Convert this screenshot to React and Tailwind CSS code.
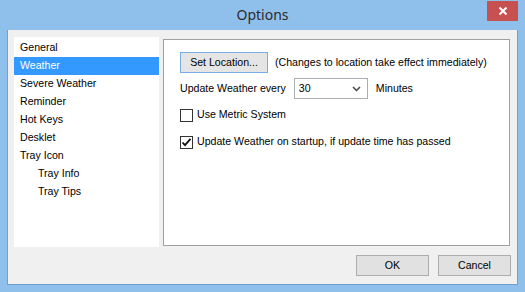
import { useState } from "react";

const items = [
  { label: "General" },
  { label: "Weather" },
  { label: "Severe Weather" },
  { label: "Reminder" },
  { label: "Hot Keys" },
  { label: "Desklet" },
  { label: "Tray Icon" },
  { label: "Tray Info", sub: true },
  { label: "Tray Tips", sub: true },
];

function CheckBox({ checked, label }) {
  return (
    <div className="flex items-center h-[14px]">
      <div className="w-[13px] h-[13px] border border-[#333333] bg-white flex items-center justify-center">
        {checked && (
          <svg width="11" height="11" viewBox="0 0 11 11">
            <path d="M1.5 5.5 L4 8.2 L9.5 1.8" fill="none" stroke="#111" strokeWidth="1.8" />
          </svg>
        )}
      </div>
      <span className="ml-[4px]">{label}</span>
    </div>
  );
}

export default function App() {
  const [selected, setSelected] = useState(1);

  return (
    <div
      className="w-[525px] h-[292px] bg-[#8fc0ec] flex flex-col text-[10.6px] text-black whitespace-nowrap"
      style={{ fontFamily: '"Liberation Sans", Arial, sans-serif' }}
    >
      {/* title bar */}
      <div className="h-[30px] flex items-start relative">
        <div
          className="flex-1 h-[30px] flex items-center justify-center text-[14px] text-[#2b2b2b] pb-[1px]"
          style={{ fontFamily: '"Noto Sans", sans-serif' }}
        >
          Options
        </div>
        <div className="absolute left-[487px] top-[1px] w-[31px] h-[20px] bg-[#c75050] flex items-center justify-center">
          <svg width="10" height="10" viewBox="0 0 10 10">
            <path d="M1.5 1.5 L8.5 8.5 M8.5 1.5 L1.5 8.5" stroke="#fff" strokeWidth="2" />
          </svg>
        </div>
      </div>

      {/* client area */}
      <div className="mx-[7px] mb-[7px] flex-1 bg-[#f0f0f0] border-x border-b border-[#6f9fd0] flex flex-col pl-[6px] pr-[7px] pt-[7px]">
        <div className="flex">
          <div className="w-[145px] h-[210px] bg-white pt-[2px]">
            {items.map((it, i) => (
              <div
                key={it.label}
                onClick={() => setSelected(i)}
                className={
                  "h-[18px] flex items-center cursor-default " +
                  (it.sub ? "pl-[24px] " : "pl-[6px] ") +
                  (selected === i ? "bg-[#3399ff] text-white" : "text-black")
                }
              >
                {it.label}
              </div>
            ))}
          </div>

          <div className="ml-[4px] mt-[2px] flex-1 h-[207px] bg-white border border-[#a0a0a0] pl-[16px] pt-[12px]">
            <div className="flex items-center">
              <div className="w-[88px] h-[21px] border border-[#78aee5] bg-[#e5e5e5] flex items-center justify-center">
                Set Location...
              </div>
              <span className="ml-[7px]">(Changes to location take effect immediately)</span>
            </div>

            <div className="flex items-center mt-[5px]">
              <span>Update Weather every</span>
              <div className="ml-[8px] w-[74px] h-[21px] border border-[#abadb3] bg-white flex items-center pl-[4px] pr-[6px]">
                <span className="flex-1">30</span>
                <svg width="9" height="6" viewBox="0 0 9 6">
                  <path d="M1 1 L4.5 4.5 L8 1" fill="none" stroke="#444" strokeWidth="1.5" />
                </svg>
              </div>
              <span className="ml-[8px]">Minutes</span>
            </div>

            <div className="mt-[9px]">
              <CheckBox label="Use Metric System" />
            </div>
            <div className="mt-[13px]">
              <CheckBox checked label="Update Weather on startup, if update time has passed" />
            </div>
          </div>
        </div>

        <div className="flex justify-end mt-[8px] mr-[-1px] gap-[9px]">
          <div className="w-[73px] h-[21px] border border-[#adadad] bg-[#e1e1e1] flex items-center justify-center">
            OK
          </div>
          <div className="w-[73px] h-[21px] border border-[#adadad] bg-[#e1e1e1] flex items-center justify-center">
            Cancel
          </div>
        </div>
      </div>
    </div>
  );
}
